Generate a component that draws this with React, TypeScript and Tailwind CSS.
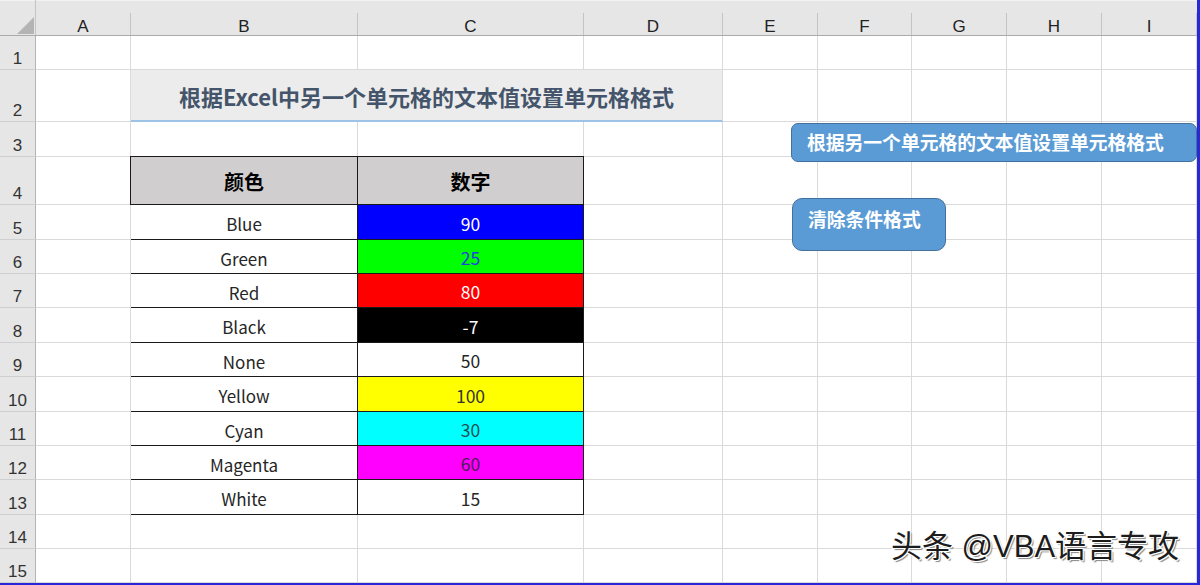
import React from 'react';

const COLS = ['A', 'B', 'C', 'D', 'E', 'F', 'G', 'H', 'I'];
const ROWS = [1, 2, 3, 4, 5, 6, 7, 8, 9, 10, 11, 12, 13, 14, 15];

type Entry = { name: string; value: string; bg: string; fg: string };

const DATA: Entry[] = [
  { name: 'Blue', value: '90', bg: 'bg-[#0000ff]', fg: 'text-white' },
  { name: 'Green', value: '25', bg: 'bg-[#00ff00]', fg: 'text-[#2140e0]' },
  { name: 'Red', value: '80', bg: 'bg-[#ff0000]', fg: 'text-white' },
  { name: 'Black', value: '-7', bg: 'bg-black', fg: 'text-white' },
  { name: 'None', value: '50', bg: 'bg-white', fg: 'text-[#262626]' },
  { name: 'Yellow', value: '100', bg: 'bg-[#ffff00]', fg: 'text-[#333]' },
  { name: 'Cyan', value: '30', bg: 'bg-[#00ffff]', fg: 'text-[#1f4f55]' },
  { name: 'Magenta', value: '60', bg: 'bg-[#ff00ff]', fg: 'text-[#4a1f55]' },
  { name: 'White', value: '15', bg: 'bg-white', fg: 'text-[#262626]' },
];

const cjk = "font-['Noto_Sans_CJK_SC','Noto_Sans',sans-serif]";
const ui = "font-['Liberation_Sans','Noto_Sans_CJK_SC',sans-serif]";

function Gridline() {
  return <div className="border-b border-r border-[#dadada] bg-white" />;
}

function RowHeader({ n }: { n: number }) {
  return (
    <div className={`flex items-end justify-center border-b border-r border-b-[#cfcfcf] border-r-[#b3b3b3] bg-[#e6e6e6] pb-[2px] text-[17px] leading-none text-[#333] ${ui}`}>
      {n}
    </div>
  );
}

function ColorTable() {
  return (
    <div className={`row-span-10 col-span-2 ml-[-1px] mt-[-1px] grid grid-cols-[227px_226px] grid-rows-[48px_35px_34px_34px_35px_34px_35px_34px_34px_35px] border-l border-t border-[#1a1a1a] ${cjk}`}>
      <div className="flex items-center justify-center border-b border-r border-[#1a1a1a] bg-[#d0cece] pt-[2px] text-[20px] font-bold text-black">颜色</div>
      <div className="flex items-center justify-center border-b border-r border-[#1a1a1a] bg-[#d0cece] pt-[2px] text-[20px] font-bold text-black">数字</div>
      {DATA.map((d) => (
        <React.Fragment key={d.name}>
          <div className="flex items-center justify-center border-b border-r border-[#1a1a1a] bg-white pt-[4px] text-[17px] text-[#262626]">
            {d.name}
          </div>
          <div className={`flex items-center justify-center border-b border-r border-[#1a1a1a] pt-[4px] text-[17.5px] ${d.bg} ${d.fg}`}>
            {d.value}
          </div>
        </React.Fragment>
      ))}
    </div>
  );
}

export default function App() {
  return (
    <div className="relative h-[585px] w-[1200px] overflow-hidden border-b-2 border-r-[3px] border-[#2828d8] bg-white">
      {/* column headers */}
      <div className="h-[13px] border-t border-[#f2f2f2] bg-[#e6e6e6]" />
      <div className={`grid h-[23px] grid-cols-[36px_95px_227px_226px_139px_95px_94px_95px_95px_95px] border-b border-[#ababab] bg-[#e6e6e6] text-[17px] leading-none text-[#222] ${ui}`}>
        <div className="relative mt-[-13px] border-r border-[#c4c4c4]">
          <svg className="absolute left-[17px] top-[17px]" width="17" height="17" viewBox="0 0 17 17">
            <polygon points="17,0 17,17 0,17" fill="#b4b4b4" />
          </svg>
        </div>
        {COLS.map((c) => (
          <div key={c} className="flex items-center justify-center border-r border-[#c4c4c4] pt-[4px]">
            {c}
          </div>
        ))}
      </div>

      {/* sheet body */}
      <div className="grid grid-cols-[36px_95px_227px_226px_139px_95px_94px_95px_95px_95px] grid-rows-[34px_52px_35px_48px_35px_34px_34px_35px_34px_35px_34px_34px_35px_34px_34px]">
        {ROWS.map((r) => {
          const cells: React.ReactNode[] = [<RowHeader key={`h${r}`} n={r} />];
          COLS.forEach((c) => {
            if (r === 2 && c === 'B') {
              cells.push(
                <div
                  key="title"
                  className={`col-span-3 flex items-center justify-center border-b-2 border-r border-b-[#9dc3e6] border-r-[#dadada] bg-[#ececec] pt-[2px] text-[22px] font-bold text-[#44546a] ${cjk}`}
                >
                  根据Excel中另一个单元格的文本值设置单元格格式
                </div>,
              );
              return;
            }
            if (r === 2 && (c === 'C' || c === 'D')) return;
            if (r === 4 && c === 'B') {
              cells.push(<ColorTable key="table" />);
              return;
            }
            if (r >= 4 && r <= 13 && (c === 'B' || c === 'C')) return;
            cells.push(<Gridline key={`${c}${r}`} />);
          });
          return cells;
        })}
      </div>

      {/* shapes floating on the sheet */}
      <button
        className={`absolute left-[791px] top-[123px] flex h-[39px] w-[406px] items-center rounded-[7px] border-[1.5px] border-[#41719c] bg-[#5b9bd5] pl-[15px] text-[18.8px] font-bold leading-none text-white ${cjk}`}
      >
        根据另一个单元格的文本值设置单元格格式
      </button>
      <button
        className={`absolute left-[792px] top-[198px] flex h-[53px] w-[154px] items-start rounded-[10px] border-[1.5px] border-[#41719c] bg-[#5b9bd5] pl-[15px] pt-[11px] text-[18.8px] font-bold leading-none text-white ${cjk}`}
      >
        清除条件格式
      </button>

      <div
        className={`absolute left-[891px] top-[531px] text-[31px] leading-none text-[#1c1c1c] [text-shadow:1px_1px_0_#fff,-1px_-1px_0_#fff,1px_-1px_0_#fff,-1px_1px_0_#fff,2px_2px_1px_#888] font-['Liberation_Sans','Noto_Sans_CJK_SC',sans-serif]`}
      >
        头条 @VBA语言专攻
      </div>
    </div>
  );
}
